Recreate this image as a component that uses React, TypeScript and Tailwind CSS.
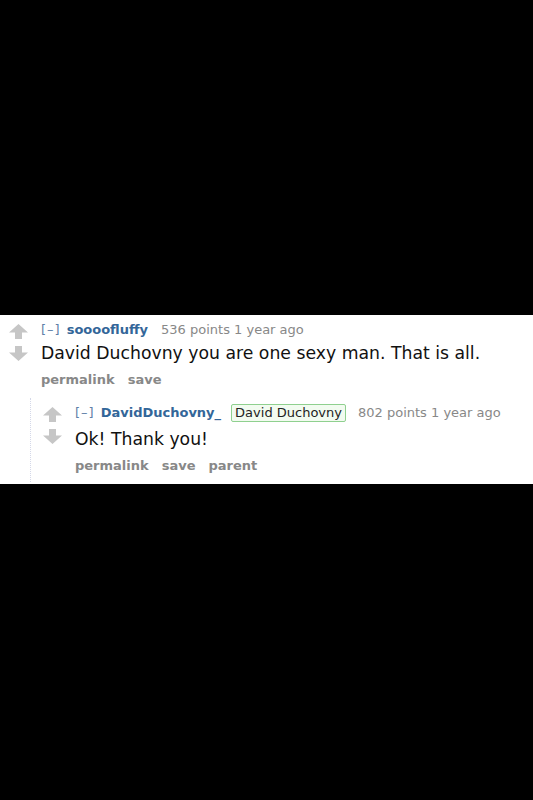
import React from 'react';

const Arrows = () => (
  <div className="flex flex-col gap-[7px] pt-[3px] w-[19px]">
    <svg width="19" height="15" viewBox="0 0 19 15">
      <path d="M9.5 0 L19 8.5 L13 8.5 L13 15 L6 15 L6 8.5 L0 8.5 Z" fill="#c6c6c6" />
    </svg>
    <svg width="19" height="15" viewBox="0 0 19 15">
      <path d="M9.5 15 L19 6.5 L13 6.5 L13 0 L6 0 L6 6.5 L0 6.5 Z" fill="#c6c6c6" />
    </svg>
  </div>
);

const Tagline = ({ user, flair, points }: { user: string; flair?: string; points: string }) => (
  <div className="flex items-center h-[18px] text-[13px] leading-[18px] whitespace-nowrap">
    <span className="text-[#5f7fa8] tracking-[1px]">[–]</span>
    <span className="ml-[6px] font-bold text-[#336699]">{user}</span>
    {flair && (
      <span className="ml-[10px] border border-[#8fd08f] bg-[#f2fbf0] rounded-[2px] px-[3px] leading-[16px] text-[#222]">
        {flair}
      </span>
    )}
    <span className={`${flair ? 'ml-[12px]' : 'ml-[13px]'} text-[#888]`}>{points} points 1 year ago</span>
  </div>
);

const Buttons = ({ items }: { items: string[] }) => (
  <div className="flex gap-[13px] text-[13px] font-bold text-[#888] leading-[18px] mt-[7px]">
    {items.map((b) => (
      <span key={b}>{b}</span>
    ))}
  </div>
);

export default function App() {
  return (
    <div className="bg-black w-[533px] h-[800px] flex flex-col" style={{ fontFamily: '"DejaVu Sans", Verdana, sans-serif' }}>
      <div className="mt-[315px] h-[169px] bg-white">
        <div className="flex pl-[9px] pt-[6px]">
          <Arrows />
          <div className="ml-[13px]">
            <Tagline user="soooofluffy" points="536" />
            <div className="text-[17.25px] leading-[22px] text-[#111] mt-[3px]">
              David Duchovny you are one sexy man. That is all.
            </div>
            <Buttons items={['permalink', 'save']} />
          </div>
        </div>
        <div className="ml-[30px] mt-[9px] border-l border-dotted border-[#d4d8e8] flex pl-[12px] pt-[6px] h-[84px]">
          <Arrows />
          <div className="ml-[13px]">
            <Tagline user="DavidDuchovny_" flair="David Duchovny" points="802" />
            <div className="text-[17.25px] leading-[22px] text-[#111] mt-[6px]">Ok! Thank you!</div>
            <Buttons items={['permalink', 'save', 'parent']} />
          </div>
        </div>
      </div>
    </div>
  );
}
